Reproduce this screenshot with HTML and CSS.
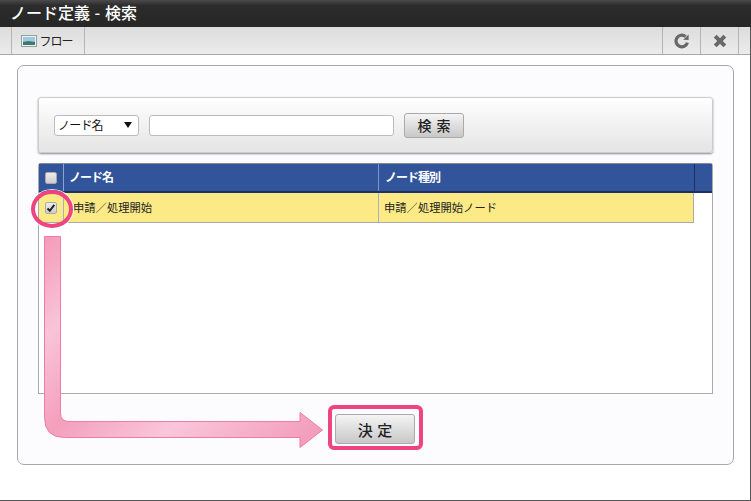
FILE: index.html
```html
<!DOCTYPE html>
<html lang="ja">
<head>
<meta charset="utf-8">
<title>ノード定義 - 検索</title>
<link rel="stylesheet" href="styles.css">
</head>
<body>
<div class="window">
  <header class="titlebar">ノード定義 - 検索</header>
  <nav class="toolbar">
    <button class="tool tool-flow" type="button">
      <svg class="flow-icon" width="16" height="12" viewBox="0 0 16 12"><rect x=".5" y=".5" width="15" height="11" fill="#eef2f2" stroke="#8f9f9f"/><rect x="2" y="2" width="12" height="8" fill="#9cc8e2"/><path d="M2 7l5-1 7 1v3H2z" fill="#3f7a68"/></svg>
      <span>フロー</span>
    </button>
    <div class="tool-spacer"></div>
    <button class="tool tool-icon" type="button" aria-label="更新">
      <svg width="16" height="16" viewBox="0 0 16 16"><path d="M13.4 9.6A5.8 5.8 0 1 1 11.6 3.6" fill="none" stroke="#686868" stroke-width="3.2"/><path d="M9.2 6.800L14.600 7V1.600z" fill="#686868"/></svg>
    </button>
    <button class="tool tool-icon tool-last" type="button" aria-label="閉じる">
      <svg width="14" height="14" viewBox="0 0 14 14"><path d="M2.2 2.2l9.6 9.600M11.800 2.200l-9.600 9.600" stroke="#686868" stroke-width="4"/></svg>
    </button>
  </nav>
  <main class="panel">
    <section class="search">
      <div class="select">ノード名<span class="select-arrow"></span></div>
      <div class="input"></div>
      <button class="btn btn-search" type="button">検 索</button>
    </section>
    <section class="grid">
      <div class="grid-head">
        <div class="cell c-check"><span class="check"></span></div>
        <div class="cell c-name">ノード名</div>
        <div class="cell c-type">ノード種別</div>
        <div class="cell c-rest"></div>
      </div>
      <div class="grid-row">
        <div class="cell c-check"><span class="check check-on">
          <svg width="10" height="10" viewBox="0 0 10 10"><path d="M1.500 5.500l2.300 2.300 4.500-6" fill="none" stroke="#222" stroke-width="2"/></svg>
        </span></div>
        <div class="cell c-name">申請／処理開始</div>
        <div class="cell c-type">申請／処理開始ノード</div>
      </div>
    </section>
    <div class="actions"><button class="btn btn-ok" type="button">決 定</button></div>
  </main>
  <svg class="arrow" width="290" height="222" viewBox="0 0 290 222">
    <defs>
      <linearGradient id="pink" gradientUnits="userSpaceOnUse" x1="0" y1="0" x2="235" y2="235">
        <stop offset="0" stop-color="#f49ab8"/>
        <stop offset=".22" stop-color="#f9c4d8"/>
        <stop offset=".43" stop-color="#f49fbc"/>
        <stop offset=".68" stop-color="#f9c6da"/>
        <stop offset="1" stop-color="#f39dbb"/>
      </linearGradient>
    </defs>
    <path d="M1.500.5H17.500V177Q17.500 185.500 26 185.500H257V176.500L279.500 194 257 211.500V201.500H21.500Q1.500 201.500 1.500 181.500Z" fill="url(#pink)" stroke="#ef7da3"/>
  </svg>
  <div class="ring"></div>
  <div class="ok-frame"></div>
</div>
</body>
</html>
```

FILE: styles.css
```css
* { box-sizing: border-box; }
html, body { margin: 0; padding: 0; }
body { width: 751px; height: 501px; overflow: hidden; background: #fff; font-family: "Noto Sans CJK JP", "Liberation Sans", sans-serif; font-size: 11px; color: #222; }
button { font-family: inherit; padding: 0; margin: 0; }

.window { position: relative; width: 751px; height: 501px; background: #fff; border-right: 1px solid #555; border-bottom: 1px solid #555; display: flex; flex-direction: column; }

.titlebar { height: 27px; padding-left: 10px; background: linear-gradient(#4a4a4a, #2c2c2c 20%, #262626); color: #fff; font-size: 16px; font-weight: 500; line-height: 25px; word-spacing: 1px; margin-right: -1px; }

.toolbar { height: 28px; display: flex; padding-left: 11px; padding-right: 11px; background: linear-gradient(#dcdcdc, #ececec); border-bottom: 1px solid #a8a8a8; }
.tool { height: 27px; border: 0; background: transparent; border-left: 1px solid #b4b4b4; display: flex; align-items: center; justify-content: center; }
.tool-flow { width: 74px; border-right: 1px solid #b4b4b4; gap: 2px; padding-right: 2px; color: #222; font-size: 12px; letter-spacing: -1px; }
.tool-spacer { flex: 1; }
.tool-icon { width: 38px; }
.tool-last { border-right: 1px solid #b4b4b4; width: 39px; }

.panel { width: 717px; height: 400px; margin: 10px 0 0 17px; padding: 31px 20px 0 20px; background: #fcfcfe; border: 1px solid #a8a8a8; border-radius: 7px; }

.search { width: 675px; height: 56px; display: flex; align-items: center; padding-left: 15px; background: linear-gradient(#fff, #e4e4e4); border: 1px solid #ccc; border-radius: 3px; box-shadow: 0 1px 2px #888; }
.select { position: relative; width: 85px; height: 21px; margin-right: 10px; background: #fff; border: 1px solid #bbb; border-radius: 3px; padding-left: 3px; line-height: 18px; font-size: 12px; letter-spacing: -.8px; color: #111; }
.select-arrow { position: absolute; right: 6px; top: 6px; border: 4px solid transparent; border-top: 6px solid #111; border-bottom: 0; }
.input { width: 245px; height: 21px; background: #fff; border: 1px solid #bbb; border-radius: 3px; margin-right: 10px; }
.btn { display: block; border: 1px solid #aaa; border-radius: 3px; background: linear-gradient(#f4f4f4, #c8c8c8); color: #222; font-weight: 500; }
.btn-search { width: 60px; height: 25px; font-size: 14px; word-spacing: 2px; }

.grid { width: 675px; height: 231px; margin-top: 10px; background: #fff; border: 1px solid #aaa; border-top-color: #888; border-radius: 3px 3px 0 0; }
.grid-head { display: flex; height: 29px; background: #31549b; border-bottom: 2px solid #1f2f5f; color: #fff; font-weight: 700; font-size: 12px; line-height: 26px; letter-spacing: -1px; }
.grid-row { display: flex; width: 655px; height: 30px; background: #fcea86; border-bottom: 1px solid #aaa; font-size: 11.300px; line-height: 28px; }
.cell { padding-left: 5px; white-space: nowrap; }
.c-check { width: 25px; padding-left: 0; display: flex; align-items: center; justify-content: center; border-right: 1px solid #7f93c4; }
.c-name { width: 315px; border-right: 1px solid #7f93c4; }
.c-type { width: 316px; }
.grid-head .c-check { border-right-color: #8fa2cc; }
.grid-head .c-type { border-right: 1px solid #1f2f5f; padding-left: 6px; }
.grid-row .c-check, .grid-row .c-name { border-right-color: #a8b0c8; }
.grid-row .c-name { padding-left: 9px; }
.grid-row .c-type { width: 315px; padding-left: 5px; border-right: 1px solid #aaa; }
.c-rest { flex: 1; }
.check { display: flex; align-items: center; justify-content: center; width: 12px; height: 12px; background: linear-gradient(#eee, #ccc); border: 1px solid #aaa; border-radius: 2px; }

.actions { display: flex; padding: 20px 0 0 297px; }
.btn-ok { width: 80px; height: 30px; font-size: 15px; word-spacing: 1px; }

.ring { position: absolute; left: 31px; top: 190px; width: 42px; height: 38px; border: 4px solid #ee4480; border-radius: 50%; box-shadow: 0 0 0 1px rgba(255, 255, 255, .8); }
.ok-frame { position: absolute; left: 328px; top: 405px; width: 95px; height: 45px; border: 4px solid #ee4480; border-radius: 6px; }
.arrow { position: absolute; left: 43px; top: 235.500px; }
```
